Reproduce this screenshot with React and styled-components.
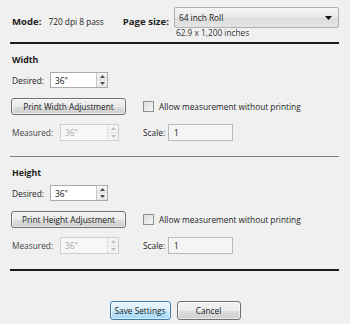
import React from "react";
import styled, { createGlobalStyle, css } from "styled-components";

const Global = createGlobalStyle`
  html, body { margin: 0; padding: 0; background: #ffffff; }
  body { font-family: "Open Sans", "Liberation Sans", sans-serif; }
  * { box-sizing: border-box; }
`;

const Dialog = styled.div`
  width: 350px;
  height: 324px;
  background: #f0f0f0;
  color: #1e1e1e;
  font-size: 8.3px;
  display: flex;
  flex-direction: column;
`;

const TopRow = styled.div`
  display: flex;
  align-items: flex-start;
  padding: 7px 11px 0 12px;
  height: 42px;
`;

const BoldLabel = styled.span`
  font-weight: 700;
  font-size: 9.6px;
  line-height: 12px;
  margin-top: 9px;
  color: #222;
  margin-right: ${(p) => p.$mr || 0}px;
`;

const Value = styled.span`
  color: #222;
  line-height: 12px;
  margin-top: 9px;
  margin-right: ${(p) => p.$mr || 0}px;
`;

const PageCol = styled.div`
  display: flex;
  flex-direction: column;
  flex: 1;
`;

const Dropdown = styled.div`
  height: 21px;
  border: 1px solid #b0b0b0;
  border-radius: 2px;
  background: linear-gradient(#f6f6f6, #e8e8e8 50%, #dcdcdc 51%, #e4e4e4);
  display: flex;
  align-items: center;
  justify-content: space-between;
  padding: 0 6px 0 4px;
  color: #1a1a1a;
`;

const SizeInfo = styled.div`
  padding-left: 2px;
  line-height: 10px;
  color: #333;
`;

const Divider = styled.div`
  height: ${(p) => (p.$thin ? 1 : 2)}px;
  background: ${(p) => (p.$thin ? "#7d7d7d" : "#1c1c1c")};
  margin: 0 11px 0 10px;
  flex-shrink: 0;
`;

const Section = styled.div`
  display: flex;
  flex-direction: column;
  padding: 10px 11px 15px 12px;
`;

const SectionTitle = styled.div`
  font-weight: 700;
  font-size: 8.8px;
  line-height: 12px;
  height: 12px;
  color: #222;
  margin-bottom: ${(p) => p.$mb}px;
`;

const Row = styled.div`
  display: flex;
  align-items: center;
  height: ${(p) => p.$h || 17}px;
  margin-bottom: ${(p) => p.$mb || 0}px;
`;

const Label = styled.span`
  width: ${(p) => p.$w}px;
  flex-shrink: 0;
  white-space: nowrap;
  margin-left: ${(p) => p.$ml || 0}px;
  color: ${(p) => (p.$disabled ? "#444" : "#222")};
`;

const SpinBox = styled.div`
  display: flex;
  width: ${(p) => p.$w}px;
  height: ${(p) => p.$h || 16}px;
  border: 1px solid ${(p) => (p.$disabled ? "#cfcfcf" : "#a9abb0")};
  background: ${(p) => (p.$disabled ? "#f7f7f7" : "#ffffff")};
`;

const SpinText = styled.div`
  flex: 1;
  padding-left: 4px;
  display: flex;
  align-items: center;
  color: ${(p) => (p.$disabled ? "#a8a8a8" : "#111")};
`;

const SpinButtons = styled.div`
  width: 11px;
  display: flex;
  flex-direction: column;
  border-left: 1px solid ${(p) => (p.$disabled ? "#e0e0e0" : "#c8c8c8")};
`;

const SpinBtn = styled.div`
  flex: 1;
  display: flex;
  align-items: center;
  justify-content: center;
  background: ${(p) =>
    p.$disabled ? "#f3f3f3" : "linear-gradient(#f8f8f8, #e3e3e3)"};
  & + & {
    border-top: 1px solid ${(p) => (p.$disabled ? "#e4e4e4" : "#c8c8c8")};
  }
`;

const TextField = styled.div`
  width: ${(p) => p.$w}px;
  height: 17px;
  border: 1px solid #b9b9b9;
  background: #f5f5f5;
  padding-left: 5px;
  display: flex;
  align-items: center;
  color: #111;
`;

const buttonBase = css`
  height: ${(p) => p.$h || 17}px;
  width: ${(p) => p.$w}px;
  border-radius: 3px;
  font-family: "Open Sans", "Liberation Sans", sans-serif;
  font-size: 8.3px;
  color: #1a1a1a;
  padding: 0;
  display: flex;
  align-items: center;
  justify-content: center;
  flex-shrink: 0;
`;

const Button = styled.button`
  ${buttonBase}
  border: 1px solid ${(p) => (p.$primary ? "#3d7bad" : "#707070")};
  background: ${(p) =>
    p.$primary
      ? "linear-gradient(#eaf6fd, #d9f0fc 50%, #bee6fd 51%, #a7d9f5)"
      : "linear-gradient(#f2f2f2, #ebebeb 50%, #dddddd 51%, #cfcfcf)"};
  box-shadow: inset 0 0 0 1px rgba(255, 255, 255, 0.6);
  margin-left: ${(p) => p.$ml || 0}px;
`;

const Check = styled.span`
  width: 11px;
  height: 11px;
  border: 1px solid #8e8f8f;
  background: linear-gradient(135deg, #dcdcdc, #f6f6f6);
  margin: 0 5px 0 17px;
  flex-shrink: 0;
`;

const Footer = styled.div`
  flex: 1;
  display: flex;
  align-items: flex-end;
  justify-content: center;
  gap: 6px;
  padding-bottom: 4px;
`;

const Arrow = ({ up, color = "#4a4a4a" }) => (
  <svg width="5" height="3" viewBox="0 0 5 3">
    <polygon points={up ? "0,3 5,3 2.5,0" : "0,0 5,0 2.5,3"} fill={color} />
  </svg>
);

const Spin = ({ value, w, disabled }) => (
  <SpinBox $w={w} $disabled={disabled} $h={disabled ? 17 : 16}>
    <SpinText $disabled={disabled}>{value}</SpinText>
    <SpinButtons $disabled={disabled}>
      <SpinBtn $disabled={disabled}>
        <Arrow up color={disabled ? "#c0c0c0" : "#4a4a4a"} />
      </SpinBtn>
      <SpinBtn $disabled={disabled}>
        <Arrow color={disabled ? "#c0c0c0" : "#4a4a4a"} />
      </SpinBtn>
    </SpinButtons>
  </SpinBox>
);

const AdjustSection = ({ title, button }) => (
  <Section>
    <SectionTitle $mb={6}>{title}</SectionTitle>
    <Row $h={16} $mb={10}>
      <Label $w={38}>Desired:</Label>
      <Spin value={'36"'} w={58} />
    </Row>
    <Row $mb={9}>
      <Button $w={115} $ml={-1}>{button}</Button>
      <Check />
      <span>Allow measurement without printing</span>
    </Row>
    <Row>
      <Label $w={48} $disabled>Measured:</Label>
      <Spin value={'36"'} w={59} disabled />
      <Label $w={25} $ml={24}>Scale:</Label>
      <TextField $w={65}>1</TextField>
    </Row>
  </Section>
);

export default function App() {
  return (
    <>
      <Global />
      <Dialog>
        <TopRow>
          <BoldLabel $mr={7}>Mode:</BoldLabel>
          <Value $mr={19}>720 dpi 8 pass</Value>
          <BoldLabel $mr={5}>Page size:</BoldLabel>
          <PageCol>
            <Dropdown>
              <span>64 inch Roll</span>
              <svg width="7" height="4" viewBox="0 0 7 4">
                <polygon points="0,0 7,0 3.5,4" fill="#111" />
              </svg>
            </Dropdown>
            <SizeInfo>62.9 x 1,200 inches</SizeInfo>
          </PageCol>
        </TopRow>
        <Divider />
        <AdjustSection title="Width" button="Print Width Adjustment" />
        <Divider $thin />
        <AdjustSection title="Height" button="Print Height Adjustment" />
        <Divider />
        <Footer>
          <Button $primary $w={61} $h={19}>Save Settings</Button>
          <Button $w={64} $h={19}>Cancel</Button>
        </Footer>
      </Dialog>
    </>
  );
}
